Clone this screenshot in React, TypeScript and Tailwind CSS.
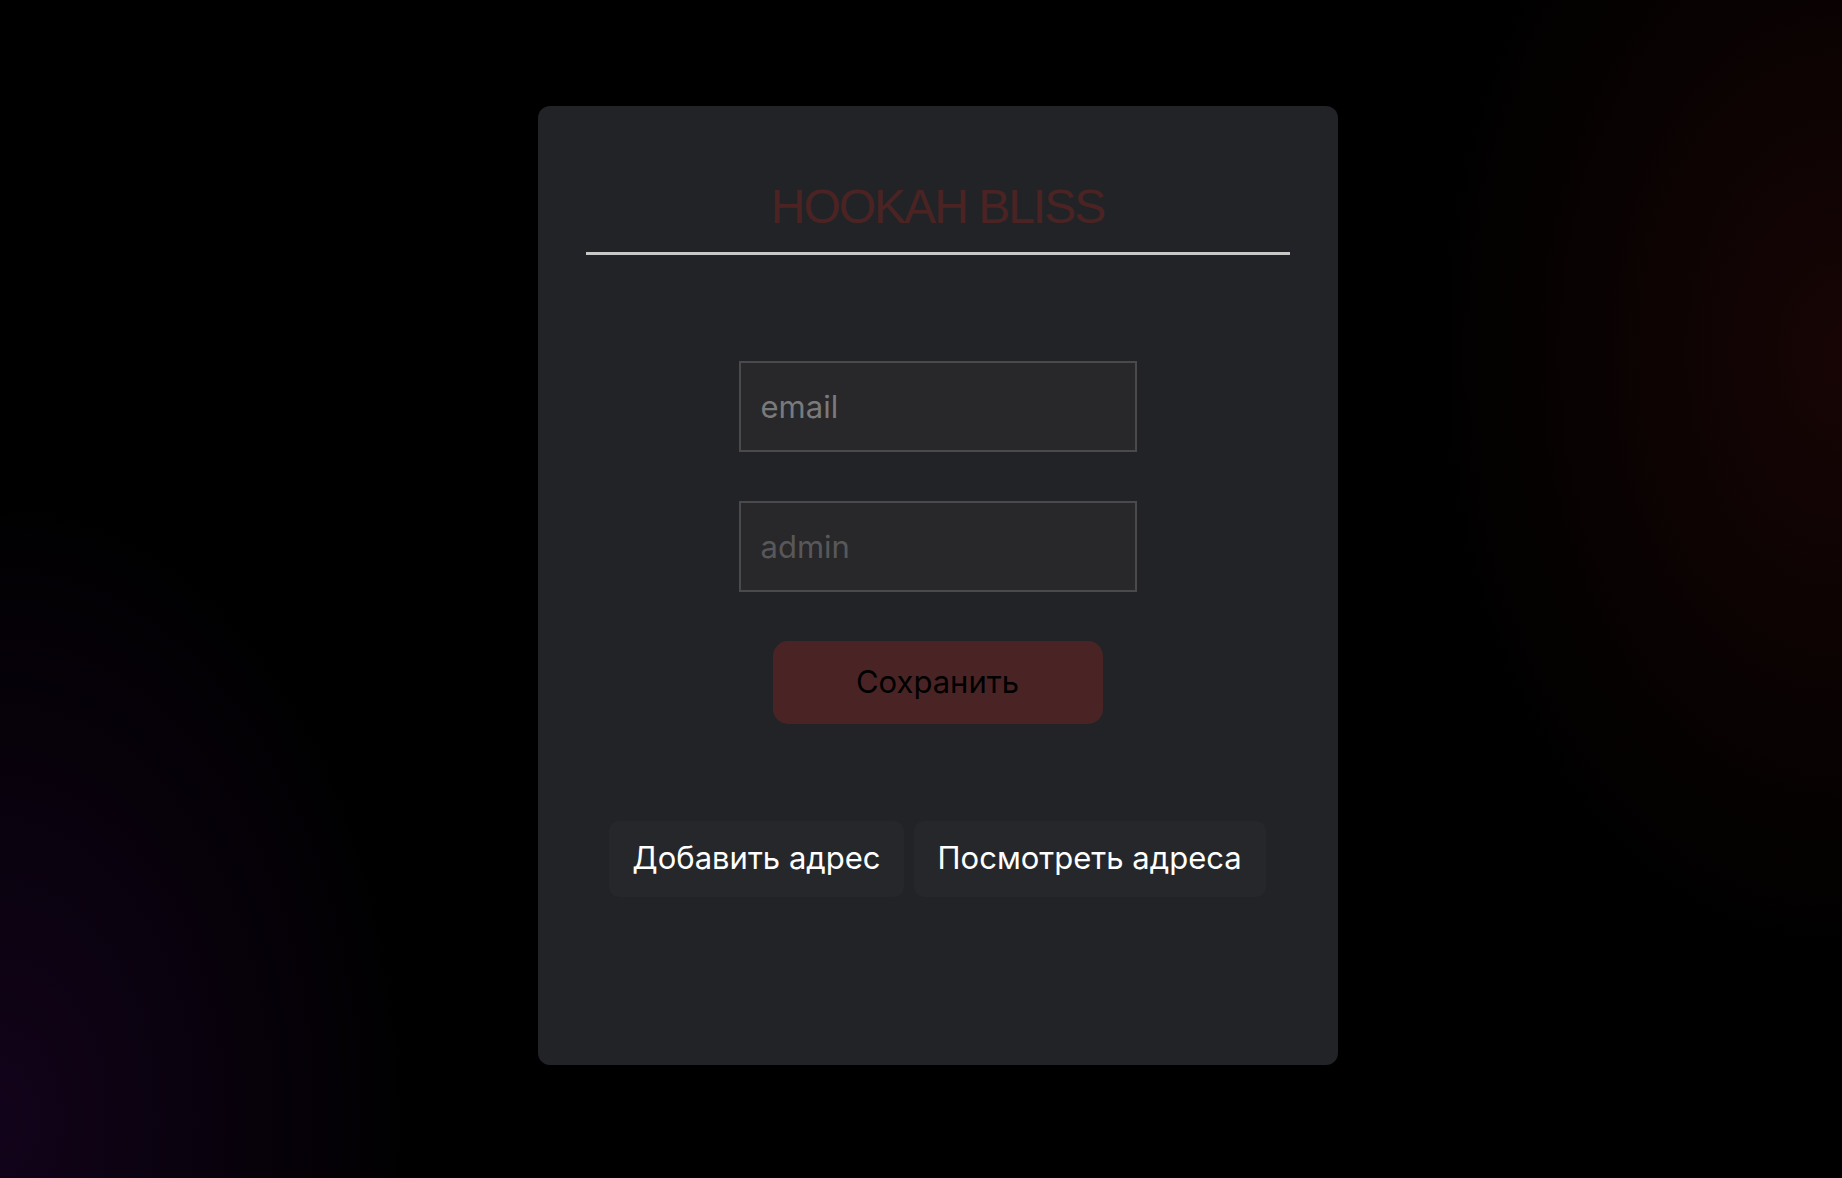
import { useState } from "react";

const sans = "font-['Inter','Noto_Sans',sans-serif]";

function AdminField({ placeholder, tone }: { placeholder: string; tone: string }) {
  const [value, setValue] = useState("");
  return (
    <input
      value={value}
      onChange={(e) => setValue(e.target.value)}
      placeholder={placeholder}
      className={`w-[398px] h-[91px] border-2 border-[#4a4a4c] bg-[#28282a] pl-[20px] text-[31px] text-white outline-none ${sans} ${tone}`}
    />
  );
}

export default function App() {
  return (
    <div className="min-h-screen w-full flex items-center justify-center pl-[33px] pb-[8px] bg-black bg-[radial-gradient(420px_640px_at_0%_95%,#12031a_0%,rgba(0,0,0,0)_100%),radial-gradient(420px_620px_at_100%_30%,#170505_0%,rgba(0,0,0,0)_100%)]">
      <div className="w-[800px] h-[959px] rounded-[12px] bg-[#222327] px-12 pt-[77px] flex flex-col items-center">
        <h1 className="leading-none text-[48px] tracking-[-2px] text-[#4b2323] font-['Liberation_Sans',Arial,sans-serif] font-normal">
          HOOKAH BLISS
        </h1>
        <div className="mt-[21px] h-[3px] w-full bg-[#c8c8c8]" />

        <div className="mt-[106px] flex flex-col items-center gap-[49px]">
          <AdminField placeholder="email" tone="placeholder:text-[#7a7a7c]" />
          <AdminField placeholder="admin" tone="placeholder:text-[#58585a]" />
          <button className={`w-[330px] h-[83px] rounded-[15px] bg-[#4a2425] text-black text-[31px] ${sans}`}>
            Сохранить
          </button>
        </div>

        <div className="mt-[97px] flex gap-[10px]">
          <button className={`h-[76px] rounded-[10px] bg-[#25272b] px-[23px] text-white text-[31px] ${sans}`}>
            Добавить адрес
          </button>
          <button className={`h-[76px] rounded-[10px] bg-[#25272b] px-[24px] text-white text-[31px] ${sans}`}>
            Посмотреть адреса
          </button>
        </div>
      </div>
    </div>
  );
}
